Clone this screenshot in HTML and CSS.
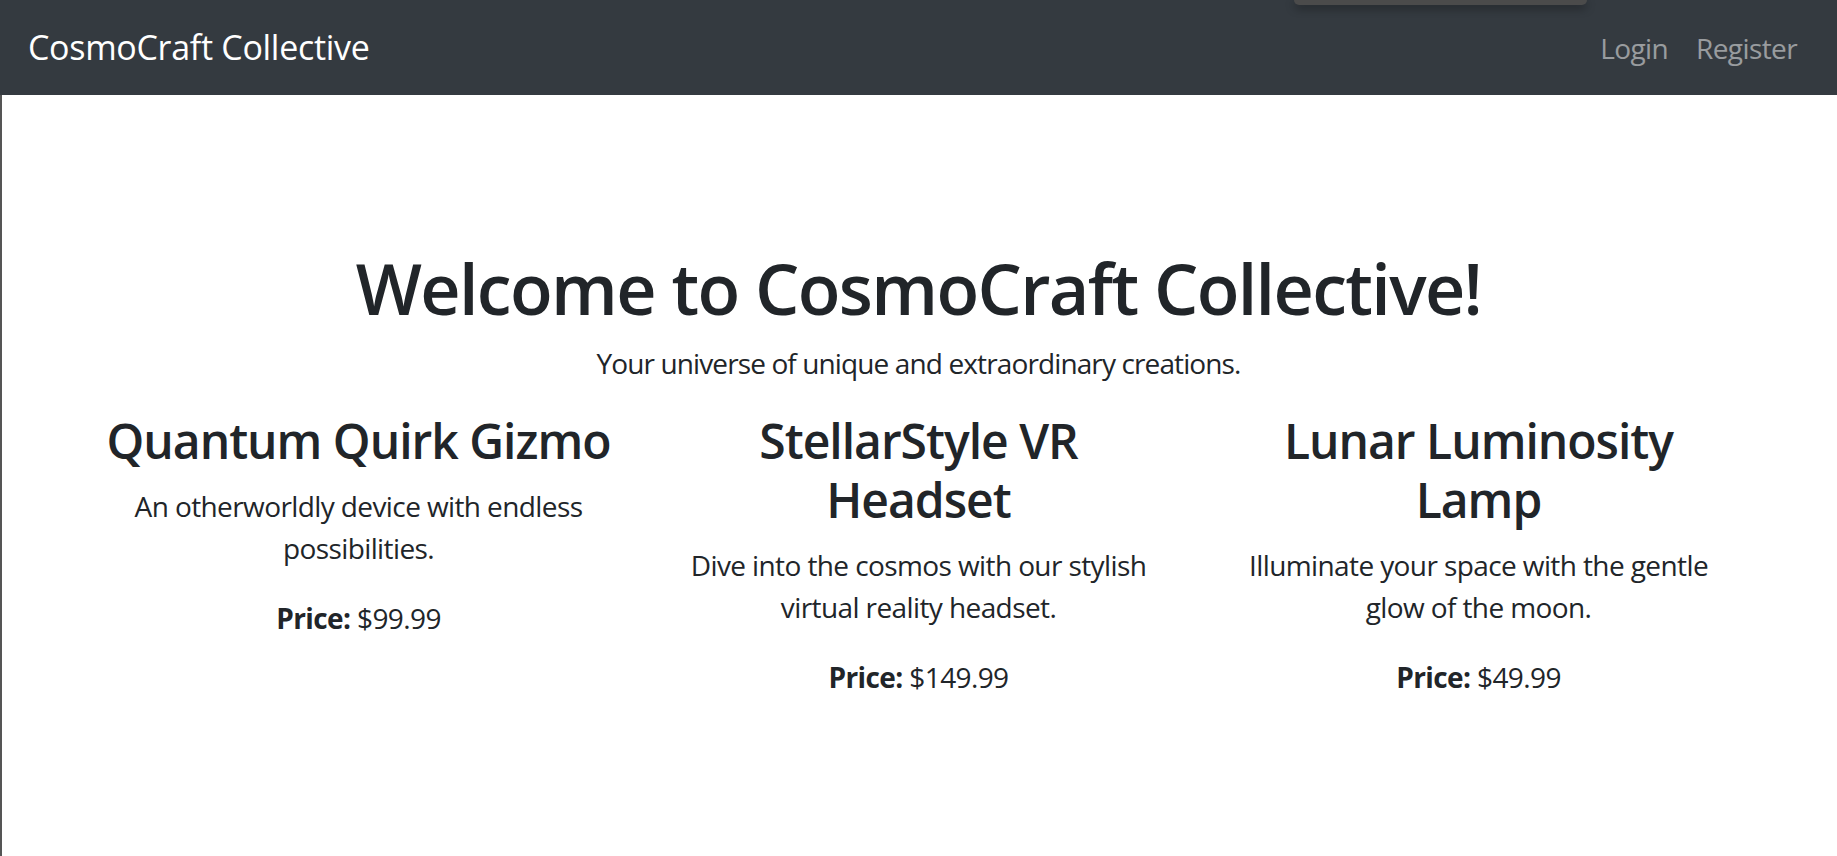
FILE: index.html
```html
<!DOCTYPE html>
<html lang="en">
<head>
<meta charset="utf-8">
<title>CosmoCraft Collective</title>
<link rel="stylesheet" href="styles.css">
</head>
<body>
<nav class="navbar">
  <a class="brand" href="#">CosmoCraft Collective</a>
  <ul class="nav">
    <li><a class="nav-link" href="#">Login</a></li>
    <li><a class="nav-link" href="#">Register</a></li>
  </ul>
  <div class="overlay-tab"></div>
</nav>
<main class="page">
  <div class="container">
    <section class="hero">
      <h1 class="hero-title">Welcome to CosmoCraft Collective!</h1>
      <p class="hero-sub">Your universe of unique and extraordinary creations.</p>
    </section>
    <section class="row">
      <div class="col">
        <h3 class="product-title">Quantum Quirk Gizmo</h3>
        <p class="product-desc">An otherworldly device with endless possibilities.</p>
        <p class="product-price"><strong>Price:</strong> $99.99</p>
      </div>
      <div class="col">
        <h3 class="product-title">StellarStyle VR Headset</h3>
        <p class="product-desc">Dive into the cosmos with our stylish virtual reality headset.</p>
        <p class="product-price"><strong>Price:</strong> $149.99</p>
      </div>
      <div class="col">
        <h3 class="product-title">Lunar Luminosity Lamp</h3>
        <p class="product-desc">Illuminate your space with the gentle glow of the moon.</p>
        <p class="product-price"><strong>Price:</strong> $49.99</p>
      </div>
    </section>
  </div>
</main>
</body>
</html>
```

FILE: styles.css
```css
* { box-sizing: border-box; }

html, body {
  margin: 0;
  padding: 0;
}

body {
  font-family: "Open Sans", "Noto Sans", sans-serif;
  font-size: 28px;
  line-height: 1.5;
  color: #212529;
  background: #fff;
  min-height: 100vh;
  display: flex;
  flex-direction: column;
}

.navbar {
  position: relative;
  height: 95px;
  background: #343a40;
  display: flex;
  align-items: center;
  justify-content: space-between;
  padding: 0 26px 0 28px;
}

.brand {
  color: #fff;
  text-decoration: none;
  font-size: 34px;
  line-height: 1.5;
  letter-spacing: -0.3px;
}

.nav {
  list-style: none;
  margin: 0;
  padding: 0;
  display: flex;
}

.nav-link {
  display: block;
  padding: 0 14px;
  color: rgba(255, 255, 255, 0.5);
  text-decoration: none;
  font-size: 28px;
  letter-spacing: -0.6px;
}

.overlay-tab {
  position: absolute;
  top: 0;
  left: 1294px;
  width: 293px;
  height: 5px;
  background: #4b4b4b;
  border-radius: 0 0 9px 9px;
  box-shadow: 0 3px 10px rgba(0, 0, 0, 0.45);
}

.page {
  flex: 1;
  box-shadow: inset 2px 0 0 #555;
}

.container {
  width: 1680px;
  margin: 0 auto;
  padding: 151px 26px 0;
}

.hero {
  text-align: center;
}

.hero-title {
  margin: 0 0 12px;
  font-size: 70px;
  font-weight: 600;
  line-height: 1.2;
  letter-spacing: -1.65px;
}

.hero-sub {
  margin: 0 0 28px;
  letter-spacing: -0.88px;
}

.row {
  display: flex;
  margin: 0 -26px;
}

.col {
  flex: 1 1 0;
  padding: 0 26px;
  text-align: center;
}

.product-title {
  margin: 0 0 14px;
  font-size: 48px;
  font-weight: 600;
  line-height: 1.225;
  letter-spacing: -1px;
}

.product-desc,
.product-price {
  margin: 0 0 28px;
  letter-spacing: -0.6px;
}

.product-price strong {
  font-weight: 700;
}
```
